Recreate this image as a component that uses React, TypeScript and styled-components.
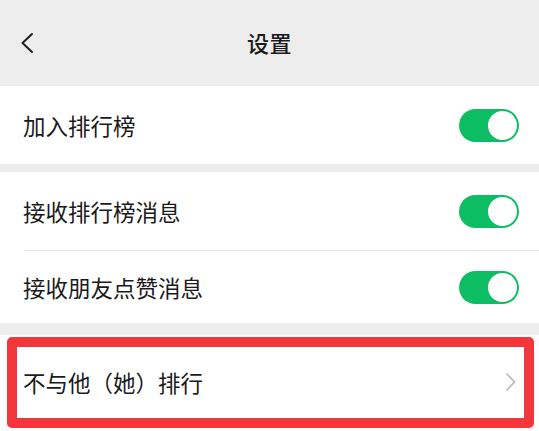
import styled, { createGlobalStyle } from "styled-components";

const GlobalStyle = createGlobalStyle`
  html, body {
    margin: 0;
    padding: 0;
    background: #ededed;
    font-family: "Noto Sans CJK SC", "Noto Sans", sans-serif;
    color: #1a1a1a;
  }
`;

const settings = [
  { group: 1, label: "加入排行榜", height: 78 },
  { group: 2, label: "接收排行榜消息", height: 78 },
  { group: 2, label: "接收朋友点赞消息", height: 72 },
];

const Toggle: React.FC<{ on: boolean }> = ({ on }) => (
  <Track $on={on}>
    <Knob $on={on} />
  </Track>
);

const App: React.FC<{}> = () => {
  const groupOne = settings.filter((s) => s.group === 1);
  const groupTwo = settings.filter((s) => s.group === 2);

  return (
    <Page>
      <GlobalStyle />
      <Header>
        <BackButton>
          <svg width="14" height="22" viewBox="0 0 14 22">
            <path
              d="M12 2 L2.5 11 L12 20"
              fill="none"
              stroke="#1f1f1f"
              strokeWidth="2"
              strokeLinecap="round"
              strokeLinejoin="round"
            />
          </svg>
        </BackButton>
        <Title>设置</Title>
      </Header>

      <Group>
        {groupOne.map((s) => (
          <Row key={s.label} $height={s.height}>
            <Label>{s.label}</Label>
            <Toggle on />
          </Row>
        ))}
      </Group>

      <Group $gap={8}>
        {groupTwo.map((s, i) => (
          <div key={s.label}>
            {i > 0 && <Divider />}
            <Row $height={s.height}>
              <Label>{s.label}</Label>
              <Toggle on />
            </Row>
          </div>
        ))}
      </Group>

      <LinkGroup>
        <LinkRow>
          <Label>不与他（她）排行</Label>
          <svg width="12" height="20" viewBox="0 0 12 20">
            <path
              d="M2 2 L9.5 10 L2 18"
              fill="none"
              stroke="#b5b5b5"
              strokeWidth="1.6"
              strokeLinecap="round"
              strokeLinejoin="round"
            />
          </svg>
        </LinkRow>
        <Highlight />
      </LinkGroup>
    </Page>
  );
};

export default App;

const Page = styled.div`
  width: 539px;
  height: 431px;
  overflow: hidden;
  display: flex;
  flex-direction: column;
  background: #ededed;
`;

const Header = styled.div`
  height: 86px;
  flex-shrink: 0;
  display: flex;
  align-items: center;
  justify-content: center;
  position: relative;
  background: #ededed;
`;

const BackButton = styled.div`
  position: absolute;
  left: 20px;
  top: 32px;
  width: 14px;
  height: 22px;
  display: flex;
`;

const Title = styled.div`
  font-size: 22px;
  font-weight: 500;
  color: #1a1a1a;
  letter-spacing: 0.5px;
  margin-bottom: 3px;
`;

const Group = styled.div<{ $gap?: number }>`
  background: #fff;
  margin-top: ${(p) => p.$gap || 0}px;
  flex-shrink: 0;
`;

const Row = styled.div<{ $height: number }>`
  height: ${(p) => p.$height}px;
  display: flex;
  align-items: center;
  justify-content: space-between;
  padding: 0 20px 0 23px;
`;

const Label = styled.span`
  font-size: 22.5px;
  color: #1a1a1a;
`;

const Divider = styled.div`
  height: 1px;
  margin-left: 24px;
  background: #e6e6e6;
`;

const Track = styled.div<{ $on: boolean }>`
  width: 60px;
  height: 33px;
  border-radius: 17px;
  background: ${(p) => (p.$on ? "#0dbd63" : "#e5e5e5")};
  position: relative;
  flex-shrink: 0;
`;

const Knob = styled.div<{ $on: boolean }>`
  position: absolute;
  top: 2px;
  left: ${(p) => (p.$on ? "29px" : "2px")};
  width: 29px;
  height: 29px;
  border-radius: 50%;
  background: #fff;
`;

const LinkGroup = styled.div`
  margin-top: 12px;
  flex: 1;
  background: #fff;
  position: relative;
`;

const LinkRow = styled.div`
  height: 100%;
  display: flex;
  align-items: center;
  justify-content: space-between;
  padding: 0 22px 2px 23px;
  box-sizing: border-box;
`;

const Highlight = styled.div`
  position: absolute;
  top: 2px;
  left: 7px;
  right: 5px;
  bottom: 3px;
  border: 10px solid #f2363c;
  border-radius: 5px;
  pointer-events: none;
`;
